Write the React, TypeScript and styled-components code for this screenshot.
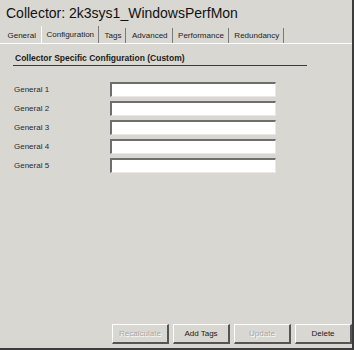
import React, { ReactElement } from 'react';
import styled, { createGlobalStyle } from 'styled-components';

const GlobalStyle = createGlobalStyle`
  html, body {
    margin: 0;
    padding: 0;
    background: #d9d7d2;
  }
`;

const TABS = ['General', 'Configuration', 'Tags', 'Advanced', 'Performance', 'Redundancy'];
const FIELDS = ['General 1', 'General 2', 'General 3', 'General 4', 'General 5'];
const BUTTONS = [
  { label: 'Recalculate', disabled: true },
  { label: 'Add Tags', disabled: false },
  { label: 'Update', disabled: true },
  { label: 'Delete', disabled: false },
];

const App = (): ReactElement => (
  <>
    <GlobalStyle />
    <Window>
      <Title>Collector: 2k3sys1_WindowsPerfMon</Title>

      <TabStrip>
        {TABS.map((tab) => (
          <Tab key={tab} active={tab === 'Configuration'}>
            {tab}
          </Tab>
        ))}
      </TabStrip>

      <Body>
        <SectionHeader>Collector Specific Configuration (Custom)</SectionHeader>

        <FieldGrid>
          {FIELDS.map((field) => (
            <React.Fragment key={field}>
              <Label>{field}</Label>
              <Input type="text" />
            </React.Fragment>
          ))}
        </FieldGrid>
      </Body>

      <Footer>
        {BUTTONS.map((b) => (
          <Button key={b.label} disabled={b.disabled}>
            {b.label}
          </Button>
        ))}
      </Footer>
    </Window>
  </>
);

// 창 전체
const Window = styled.div`
  width: 354px;
  height: 350px;
  box-sizing: border-box;
  display: flex;
  flex-direction: column;
  background: #d9d7d2;
  border-right: 2px solid #3c3c3c;
  border-bottom: 2px solid #3c3c3c;
  font-family: 'Liberation Sans', Arial, sans-serif;
  color: #1a1a1a;
`;

const Title = styled.div`
  height: 24px;
  padding: 5px 0 0 6px;
  box-sizing: border-box;
  font-size: 14px;
  line-height: 17px;
  color: #111;
`;

const TabStrip = styled.div`
  display: flex;
  align-items: flex-end;
  height: 19px;
  padding-left: 2px;
  border-bottom: 1px solid #ffffff;
`;

const Tab = styled.div<{ active?: boolean }>`
  height: ${({ active }) => (active ? '17px' : '15px')};
  padding: 0 4px 0 4.5px;
  display: flex;
  align-items: center;
  box-sizing: border-box;
  font-size: 8px;
  color: #222;
  border-left: 1px solid ${({ active }) => (active ? '#ffffff' : 'transparent')};
  border-right: 1px solid #7a7a7a;
  &:first-child {
    border-right-color: transparent;
  }
`;

const Body = styled.div`
  flex: 1;
  padding: 9px 0 0 13px;
`;

const SectionHeader = styled.div`
  width: 292px;
  font-size: 8.5px;
  font-weight: bold;
  padding: 0 0 2px 2px;
  border-bottom: 1px solid #3a3a3a;
  line-height: 10px;
`;

const FieldGrid = styled.div`
  display: grid;
  grid-template-columns: 96px 166px;
  row-gap: 4px;
  margin-top: 16px;
  padding-left: 1px;
`;

const Label = styled.div`
  font-size: 8px;
  line-height: 15px;
  color: #2a2a2a;
`;

const Input = styled.input`
  width: 166px;
  height: 15px;
  box-sizing: border-box;
  margin: 0;
  padding: 0 2px;
  background: #ffffff;
  border-top: 2px solid #6e6e6e;
  border-left: 2px solid #6e6e6e;
  border-bottom: 1px solid #e8e8e8;
  border-right: 1px solid #e8e8e8;
  outline: none;
`;

const Footer = styled.div`
  display: flex;
  justify-content: flex-end;
  gap: 4px;
  padding: 0 0 4px 0;
`;

const Button = styled.button`
  width: 57px;
  height: 20px;
  margin: 0;
  padding: 0;
  box-sizing: border-box;
  background: #d9d7d2;
  font-family: 'Liberation Sans', Arial, sans-serif;
  font-size: 8px;
  color: #1a1a1a;
  border-top: 1px solid #ffffff;
  border-left: 1px solid #ffffff;
  border-right: 2px solid #555555;
  border-bottom: 2px solid #555555;
  &:disabled {
    color: #a8a6a2;
    text-shadow: 1px 1px 0 #ffffff;
  }
`;

export default App;
